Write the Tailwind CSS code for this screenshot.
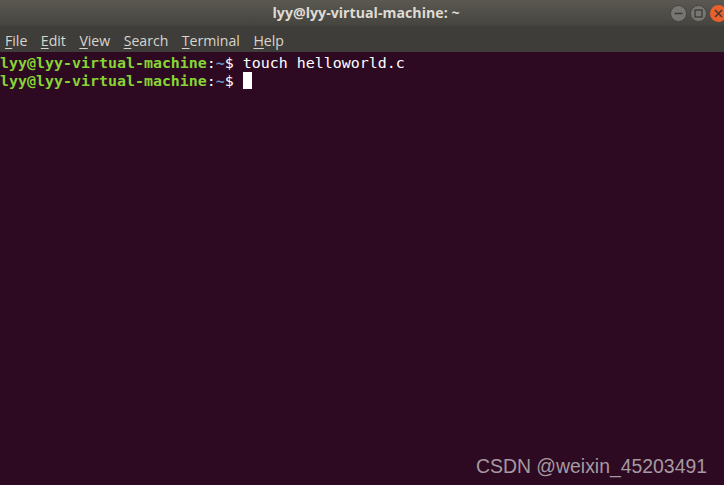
<!DOCTYPE html>
<html lang="en">
<head>
    <meta charset="UTF-8">
    <script src="https://cdn.jsdelivr.net/npm/@tailwindcss/browser@4"></script>
    <title>lyy@lyy-virtual-machine: ~</title>
</head>
<body class="bg-[#2d0922]">
    <div class="h-[485px] w-[724px] overflow-hidden flex flex-col relative">
        <!-- title bar -->
        <div class="h-[26px] shrink-0 flex items-center justify-center relative pl-[8px] bg-gradient-to-b from-[#5a5851] to-[#45443f] font-['Open_Sans',sans-serif] text-[14.2px] font-bold text-[#dfdbd2]">
            <span>lyy@lyy-virtual-machine: ~</span>
            <div class="absolute right-[-3px] top-[5px] flex gap-[3px]">
                <span class="w-[17px] h-[17px] rounded-full border border-[#44433f] bg-[#777672] flex items-center justify-center">
                    <svg width="11" height="11" viewBox="0 0 11 11"><path d="M1.5 5.5h8" stroke="#3c3b37" stroke-width="1.5"/></svg>
                </span>
                <span class="w-[17px] h-[17px] rounded-full border border-[#44433f] bg-[#777672] flex items-center justify-center">
                    <svg width="11" height="11" viewBox="0 0 11 11"><rect x="2" y="2" width="7" height="7" fill="none" stroke="#3c3b37" stroke-width="1.3"/></svg>
                </span>
                <span class="w-[17px] h-[17px] rounded-full bg-[#e9602f] flex items-center justify-center">
                    <svg width="11" height="11" viewBox="0 0 11 11"><path d="M2 2l7 7M9 2l-7 7" stroke="#3c3b37" stroke-width="1.5"/></svg>
                </span>
            </div>
        </div>
        <!-- menu bar -->
        <div class="h-[26px] shrink-0 bg-[#3e3d39] flex items-center gap-[13.5px] pl-[5px] pt-[3px] font-['Open_Sans',sans-serif] text-[14.1px] text-[#d9d5cc]">
            <span><u class="underline-offset-2">F</u>ile</span>
            <span><u class="underline-offset-2">E</u>dit</span>
            <span><u class="underline-offset-2">V</u>iew</span>
            <span><u class="underline-offset-2">S</u>earch</span>
            <span><u class="underline-offset-2">T</u>erminal</span>
            <span><u class="underline-offset-2">H</u>elp</span>
        </div>
        <!-- terminal -->
        <div class="flex-1 bg-[#2d0922] font-['DejaVu_Sans_Mono',monospace] text-[14.95px] leading-[18px] text-white pt-[2px]">
            <div class="whitespace-pre"><span class="font-bold text-[#87d534]">lyy@lyy-virtual-machine</span>:<span class="font-bold text-[#6d96c6]">~</span>$ touch helloworld.c</div>
            <div class="flex whitespace-pre"><span><span class="font-bold text-[#87d534]">lyy@lyy-virtual-machine</span>:<span class="font-bold text-[#6d96c6]">~</span>$ </span><span class="w-[9px] h-[17px] bg-white"></span></div>
        </div>
        <!-- watermark -->
        <span class="absolute right-[17px] bottom-[8px] font-['Liberation_Sans',sans-serif] text-[19.4px] leading-[22px] text-[#a59aa1]">CSDN @weixin_45203491</span>
    </div>
</body>
</html>
